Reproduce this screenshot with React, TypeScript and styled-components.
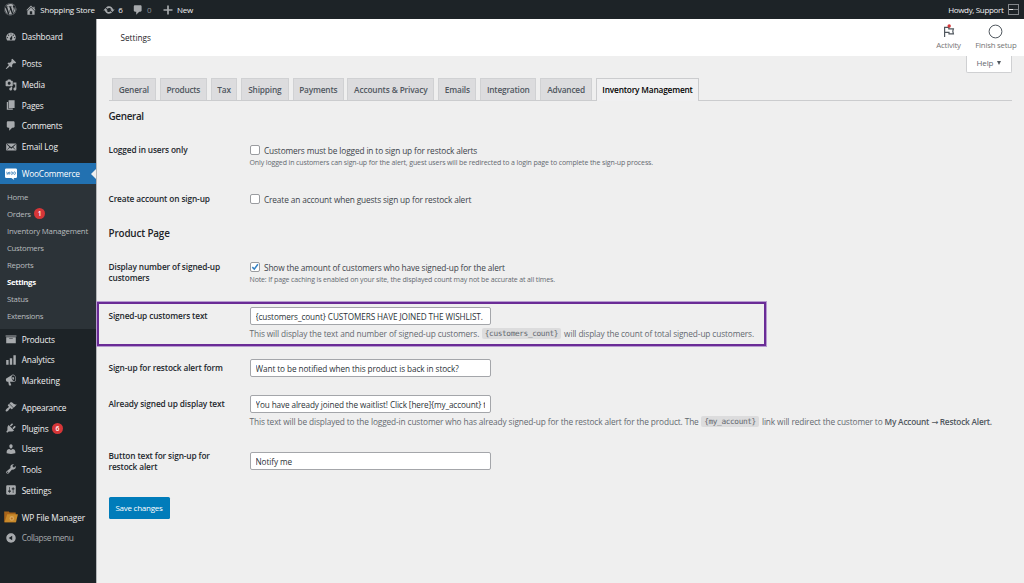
import React from "react";
import styled, { createGlobalStyle, css } from "styled-components";
import { FaWordpress } from "react-icons/fa";

const GlobalStyle = createGlobalStyle`
  * { box-sizing: border-box; }
  body {
    margin: 0;
    background: #efefef;
    color: #3c434a;
    font-family: "Open Sans", "Noto Sans", sans-serif;
    font-size: 8.3px;
    overflow: hidden;
  }
`;

/* ---------- Icons (20 x 20 grid) ---------- */

const iconPaths = {
  home: "M16 8.5l1.53 1.53-1.06 1.06L10 4.6l-6.47 6.49-1.06-1.06L10 2.5l4 4v-2h2v4zm-6-2.46l6 5.99V18H4v-5.97zM12 17v-5H8v5h4z",
  update:
    "M10.2 3.9c3.3 0 6 2.3 6.6 5.3h2.6L15.8 13.4 12.2 9.2h1.9c-.5-1.500-2.100-2.600-3.900-2.600-1.300 0-2.400.5-3.100 1.300L5 5.900C6.300 4.700 8.100 3.900 10.200 3.900zm-.4 12.200c-3.300 0-6-2.300-6.600-5.300H.6L4.200 6.600l3.600 4.200H5.900c.5 1.500 2.100 2.600 3.900 2.600 1.300 0 2.400-.5 3.100-1.300L15 14.100c-1.300 1.200-3.100 2-5.200 2z",
  comments:
    "M5 2h9c1.1 0 2 .9 2 2v7c0 1.1-.9 2-2 2h-2l-5 5v-5H5c-1.1 0-2-.9-2-2V4c0-1.1.9-2 2-2z",
  plus: "M17.500 8.600v2.800h-6.100v6.100H8.600v-6.100H2.500V8.600h6.100V2.500h2.800v6.100z",
  dashboard:
    "M3.76 16h12.48c1.1-1.37 1.76-3.11 1.76-5 0-4.42-3.58-8-8-8s-8 3.58-8 8c0 1.89.66 3.63 1.76 5zM10 4c.55 0 1 .45 1 1s-.45 1-1 1-1-.45-1-1 .45-1 1-1zM6 6c.55 0 1 .45 1 1s-.45 1-1 1-1-.45-1-1 .45-1 1-1zm8 0c.55 0 1 .45 1 1s-.45 1-1 1-1-.45-1-1 .45-1 1-1zm-5.37 5.55L12 7v6c0 1.1-.9 2-2 2s-2-.9-2-2c0-.57.24-1.08.63-1.45zM4 10c.55 0 1 .45 1 1s-.45 1-1 1-1-.45-1-1 .45-1 1-1zm12 0c.55 0 1 .45 1 1s-.45 1-1 1-1-.45-1-1 .45-1 1-1z",
  posts:
    "M10.44 3.02l1.82-1.82 6.36 6.35-1.83 1.82c-1.05-.68-2.48-.57-3.41.36l-.75.75c-.92.93-1.04 2.35-.35 3.41l-1.83 1.82-2.41-2.41-2.8 2.79c-.42.42-3.38 2.71-3.8 2.29s1.86-3.39 2.28-3.81l2.79-2.79L4.1 9.36l1.83-1.82c1.05.69 2.48.57 3.4-.36l.75-.75c.93-.92 1.05-2.35.36-3.41z",
  media:
    "M13 11V4c0-.55-.45-1-1-1h-1.67L9 1H5L3.67 3H2c-.55 0-1 .45-1 1v7c0 .55.45 1 1 1h10c.55 0 1-.45 1-1zM7 4.5c1.38 0 2.5 1.12 2.5 2.5S8.38 9.5 7 9.5 4.5 8.38 4.5 7 5.62 4.5 7 4.5zM14 6h5v10.5c0 1.38-1.12 2.5-2.5 2.5S14 17.88 14 16.5s1.12-2.5 2.5-2.5c.17 0 .34.02.5.05V9h-3V6zm-4 8.05V13h2v3.5c0 1.38-1.12 2.5-2.5 2.5S7 17.88 7 16.5 8.12 14 9.5 14c.17 0 .34.02.5.05z",
  pages: "M6 15V2h10v13H6zm-1 1h8v2H3V5h2v11z",
  email:
    "M19 14.5v-9c0-.83-.67-1.5-1.5-1.5H3.49c-.83 0-1.5.67-1.5 1.5v9c0 .83.67 1.5 1.5 1.5H17.5c.83 0 1.5-.67 1.5-1.5zm-1.31-9.11c.33.33.15.67-.03.84L13.6 9.95l3.9 4.06c.12.14.2.36.06.51-.13.16-.43.15-.56.05l-4.37-3.73-2.14 1.95-2.13-1.95-4.37 3.73c-.13.1-.43.11-.56-.05-.14-.15-.06-.37.06-.51l3.9-4.06-4.06-3.72c-.18-.17-.36-.51-.03-.84s.67-.17.95.07l6.24 5.04 6.25-5.04c.28-.24.62-.4.95-.07z",
  products: "M19 4v2H1V4h18zM2 7h16v10H2V7zm11 3V9H7v1h6z",
  analytics: "M18 18V2h-4v16h4zm-6 0V7H8v11h4zm-6 0v-8H2v8h4z",
  marketing:
    "M18.15 5.94c.46 1.62.38 3.22-.02 4.48-.42 1.28-1.26 2.18-2.3 2.48-.16.06-.26.06-.4.06-.06.02-.12.02-.18.02-.06.02-.14.02-.22.02h-6.8l2.22 5.5c.02.14-.06.26-.14.34-.08.1-.24.16-.34.16H6.95c-.1 0-.26-.06-.34-.16-.08-.08-.16-.2-.14-.34l-1-5.5H4.25l-.02-.02c-.5.06-1.08-.18-1.54-.62s-.88-1.08-1.06-1.88c-.24-.8-.2-1.56-.02-2.2.18-.62.58-1.08 1.06-1.3l.02-.02 9-5.4c.1-.06.18-.1.24-.16.06-.04.14-.08.24-.12.16-.08.28-.12.5-.18 1.04-.3 2.24.1 3.22.98s1.84 2.24 2.26 3.86zm-2.58 5.98h-.02c.4-.1.74-.34 1.04-.7.58-.7.86-1.76.86-3.04 0-.64-.1-1.3-.28-1.98-.34-1.36-1.02-2.5-1.78-3.24s-1.68-1.1-2.46-.88c-.82.22-1.4.96-1.7 2-.32 1.04-.28 2.36.06 3.72.38 1.36 1 2.5 1.8 3.24.78.74 1.62 1.1 2.48.88zm-2.54-7.08c.22-.04.42-.02.62.04.38.16.76.48 1.02 1s.42 1.2.42 1.78c0 .3-.04.56-.12.8-.18.48-.44.84-.86.94-.34.1-.8-.06-1.14-.4s-.64-.86-.78-1.5c-.18-.62-.12-1.24.02-1.72s.48-.84.82-.94z",
  appearance:
    "M14.48 11.06L7.41 3.99l1.5-1.5c.5-.56 2.3-.47 3.51.32 1.21.8 1.43 1.28 2.91 2.1 1.18.64 2.45 1.26 4.45.85zm-.71.71L6.7 4.7 4.93 6.47c-.39.39-.39 1.02 0 1.41l1.06 1.06c.39.39.39 1.03 0 1.42-.6.6-1.43 1.11-2.21 1.69-.35.26-.7.53-1.01.84C1.43 14.23.4 16.08 1.4 17.07c.99 1 2.84-.03 4.18-1.36.31-.31.58-.66.85-1.02.57-.78 1.08-1.61 1.69-2.21.39-.39 1.02-.39 1.41 0l1.06 1.06c.39.39 1.02.39 1.41 0z",
  plugins:
    "M13.11 4.36L9.87 7.6 8 5.73l3.24-3.24c.35-.34 1.05-.2 1.56.32.52.51.66 1.21.31 1.55zm-8 1.77l.91-1.12 9.01 9.01-1.19.84c-.71.71-2.63 1.16-3.82 1.16H6.14L4.9 17.26c-.59.59-1.54.59-2.12 0-.59-.58-.59-1.53 0-2.12l1.24-1.24v-3.88c0-1.13.4-3.19 1.09-3.89zm7.26 3.97l3.24-3.24c.34-.35 1.04-.21 1.55.31.52.51.66 1.21.31 1.55l-3.24 3.25z",
  users:
    "M10 9.25c-2.27 0-2.73-3.44-2.73-3.44C7 4.02 7.82 2 9.97 2c2.16 0 2.98 2.02 2.71 3.81 0 0-.41 3.44-2.68 3.44zm0 2.57L12.72 10c2.39 0 4.52 2.33 4.52 4.53v2.49s-3.65 1.13-7.24 1.13c-3.65 0-7.24-1.13-7.24-1.13v-2.49c0-2.25 1.94-4.48 4.47-4.48z",
  tools:
    "M16.68 9.77c-1.34 1.34-3.3 1.67-4.95.99l-5.41 6.52c-.99.99-2.59.99-3.58 0s-.99-2.59 0-3.57l6.52-5.42c-.68-1.65-.35-3.61.99-4.95 1.28-1.28 3.12-1.62 4.72-1.06l-2.89 2.89 2.82 2.82 2.86-2.87c.53 1.58.18 3.39-1.08 4.65zM3.81 16.21c.4.39 1.04.39 1.43 0 .4-.4.4-1.04 0-1.43-.39-.4-1.03-.4-1.43 0-.39.39-.39 1.03 0 1.43z",
  settings:
    "M18 16V4c0-1.1-.9-2-2-2H4c-1.1 0-2 .9-2 2v12c0 1.1.9 2 2 2h12c1.1 0 2-.9 2-2zM8 11h1c.55 0 1 .45 1 1s-.45 1-1 1H8v1.5c0 .28-.22.5-.5.5s-.5-.22-.5-.5V13H6c-.55 0-1-.45-1-1s.45-1 1-1h1V5.5c0-.28.22-.5.5-.5s.5.22.5.5V11zm5-2h-1c-.55 0-1-.45-1-1s.45-1 1-1h1V5.5c0-.28.22-.5.5-.5s.5.22.5.5V7h1c.55 0 1 .45 1 1s-.45 1-1 1h-1v5.5c0 .28-.22.5-.5.5s-.5-.22-.5-.5V9z",
  collapse:
    "M10 2.16c4.33 0 7.84 3.51 7.84 7.84s-3.51 7.84-7.84 7.84S2.16 14.33 2.16 10 5.71 2.16 10 2.16zm2 11.72V6.12L6.18 9.97z",
};

type IconName = keyof typeof iconPaths;

const IconSvg = styled.svg`
  flex: none;
  display: block;
  width: 12px;
  height: 12px;
  fill: #a7aaad;
`;

const Icon = ({ name }: { name: IconName }) => (
  <IconSvg viewBox="0 0 20 20">
    <path fillRule="evenodd" d={iconPaths[name]} />
  </IconSvg>
);

const WooIcon = () => (
  <IconSvg viewBox="0 0 20 20">
    <path
      fill="#fff"
      d="M2.200 .8h15.600a2.200 2.200 0 0 1 2.200 2.200v11.400a2.200 2.200 0 0 1-2.200 2.200h-3.400l1 3.400-4.800-3.400H2.200a2.200 2.200 0 0 1-2.200-2.200V3a2.200 2.200 0 0 1 2.200-2.200z"
    />
    <path
      fill="none"
      stroke="#2271b1"
      strokeWidth="1.1"
      d="M2.800 6.200l1 4.600 2-3.800 1 3.800 1-4.600M12.800 8.600a1.500 2.300 0 1 1-3 0a1.500 2.300 0 1 1 3 0zM17.400 8.600a1.500 2.300 0 1 1-3 0a1.500 2.300 0 1 1 3 0z"
    />
  </IconSvg>
);

const FolderSvg = styled.svg`
  flex: none;
  display: block;
  width: 14px;
  height: 12px;
`;

const FolderIcon = () => (
  <FolderSvg viewBox="0 0 14 12">
    <path fill="#a8641a" d="M.2.6h4.600l.8 1h6.100v9.700H.2z" />
    <path fill="#c98a2b" d="M3.200 3.200h10.700L12 11.300H.6z" />
    <circle cx="7.800" cy="7.400" r="2.300" fill="#d9a55c" />
    <circle cx="7.800" cy="7.400" r="1" fill="#b97722" />
  </FolderSvg>
);

/* ---------- Top bar ---------- */

const AdminBar = styled.header`
  display: flex;
  align-items: center;
  height: 19px;
  padding: 0 5px 0 4px;
  background: #1d2327;
  color: #f0f0f1;
  font-size: 8px;
`;

const LogoMark = styled(FaWordpress)`
  width: 12.5px;
  height: 12.5px;
  color: #a7aaad;
`;

const BarItem = styled.div<{ $gap: number; $left: number; $track?: number; $dim?: boolean }>`
  display: flex;
  align-items: center;
  gap: ${(p) => p.$gap}px;
  margin-left: ${(p) => p.$left}px;
  letter-spacing: ${(p) => p.$track ?? 0}px;
  color: ${(p) => (p.$dim ? "#8c9196" : "inherit")};
  white-space: nowrap;
`;

const Account = styled.div`
  display: flex;
  align-items: center;
  gap: 4px;
  margin-left: auto;
  letter-spacing: -0.33px;
`;

const Avatar = styled.span`
  display: flex;
  align-items: center;
  width: 11.5px;
  height: 11px;
  border: 1px solid #82868a;

  &::before {
    content: "";
    width: 9px;
    height: 1px;
    background: linear-gradient(90deg, #e8e8e8 50%, #7b7f83 50%);
  }
`;

/* ---------- Sidebar ---------- */

const Shell = styled.div`
  display: grid;
  grid-template-columns: 96px 1fr;
  height: 564px;
`;

const Sidebar = styled.nav`
  background: #1d2327;
  padding-top: 7.5px;
`;

const MenuItem = styled.div<{ $track: number; $active?: boolean; $muted?: boolean }>`
  position: relative;
  display: flex;
  align-items: center;
  height: 20.7px;
  padding-left: 5px;
  color: ${(p) => (p.$muted ? "#a7aaad" : "#f0f0f1")};
  letter-spacing: ${(p) => p.$track}px;
  white-space: nowrap;
  ${(p) =>
    p.$active &&
    css`
      background: #2271b1;
      color: #fff;
      &::after {
        content: "";
        position: absolute;
        right: 0;
        top: 5.4px;
        border: 5px solid transparent;
        border-left-width: 0;
        border-right-color: #efefef;
      }
    `}
`;

const IconSlot = styled.span`
  display: flex;
  justify-content: center;
  width: 12px;
  margin-right: 4.7px;
`;

const Separator = styled.div`
  height: 6.3px;
`;

const SubMenu = styled.div`
  padding: 4.4px 0 4.4px 7px;
  background: #2c3338;
`;

const SubItem = styled.div<{ $track: number; $current?: boolean }>`
  display: flex;
  align-items: center;
  height: 17px;
  color: ${(p) => (p.$current ? "#fff" : "#b8bcbf")};
  font-size: 7.8px;
  font-weight: ${(p) => (p.$current ? 700 : 400)};
  letter-spacing: ${(p) => p.$track}px;
  white-space: nowrap;
`;

const Bubble = styled.span`
  display: flex;
  align-items: center;
  justify-content: center;
  width: 11px;
  height: 11px;
  margin-left: 3.5px;
  border-radius: 50%;
  background: #d63638;
  color: #fff;
  font-size: 6.8px;
  font-weight: 600;
  letter-spacing: 0;
`;

/* ---------- Page header ---------- */

const Main = styled.main`
  min-width: 0;
  border-left: 1px solid #b4b6b8;
`;

const PageHeader = styled.div`
  display: flex;
  align-items: center;
  height: 37px;
  padding: 0 7.500px 0 23.500px;
  background: #fff;
`;

const PageTitle = styled.h1`
  margin: 0 auto 0 0;
  color: #1d2327;
  font-size: 8.2px;
  font-weight: 500;
  letter-spacing: 0;
`;

const HeaderAction = styled.div<{ $left: number }>`
  display: flex;
  flex-direction: column;
  align-items: center;
  gap: 1px;
  margin: 0 0 0 ${(p) => p.$left}px;
  color: #757575;
  font-size: 7.8px;
  line-height: 11px;
  letter-spacing: -0.2px;
  white-space: nowrap;

  svg {
    width: 15px;
    height: 15px;
    fill: none;
    stroke: #50575e;
  }
`;

const HelpRow = styled.div`
  display: flex;
  justify-content: flex-end;
  height: 22px;
  padding-right: 12px;
`;

const HelpButton = styled.div`
  display: flex;
  align-items: center;
  gap: 4px;
  width: 46px;
  height: 17px;
  padding: 0 0 3px 9.5px;
  border: 1px solid #cfd0d2;
  border-top: 0;
  border-radius: 0 0 2px 2px;
  background: #fff;
  color: #646970;
  font-size: 8px;
  letter-spacing: -0.1px;

  &::after {
    content: "";
    margin-top: 1px;
    border: 2.9px solid transparent;
    border-top: 4.500px solid #50575e;
    border-bottom: 0;
  }
`;

/* ---------- Tabs ---------- */

const TabBar = styled.div`
  display: flex;
  height: 23px;
  margin: 0 12px 0 11.500px;
  padding-left: 3.3px;
  border-bottom: 1px solid #cbccce;
`;

const Tab = styled.div<{ $width: number; $gap: number; $active?: boolean; $track?: number }>`
  display: flex;
  align-items: center;
  justify-content: center;
  width: ${(p) => p.$width}px;
  height: ${(p) => (p.$active ? 23 : 22)}px;
  padding-bottom: ${(p) => (p.$active ? 1 : 0)}px;
  margin-right: ${(p) => p.$gap}px;
  border: 1px solid ${(p) => (p.$active ? "#cbccce" : "#d0d1d3")};
  border-bottom: 0;
  background: ${(p) => (p.$active ? "#f0f0f1" : "#dcdcde")};
  color: ${(p) => (p.$active ? "#000" : "#50575e")};
  font-weight: 600;
  letter-spacing: ${(p) => p.$track ?? -0.18}px;
  white-space: nowrap;
`;

/* ---------- Form ---------- */

const Form = styled.form`
  padding-left: 11.5px;
`;

const SectionTitle = styled.h2<{ $top: number; $bottom: number; $track: number }>`
  margin: ${(p) => p.$top}px 0 ${(p) => p.$bottom}px;
  color: #1d2327;
  font-size: 9.9px;
  font-weight: 600;
  line-height: 15px;
  letter-spacing: ${(p) => p.$track}px;
`;

const Row = styled.div<{ $height: number; $offset?: number }>`
  display: grid;
  grid-template-columns: 141px 1fr;
  height: ${(p) => p.$height}px;
  padding-top: ${(p) => p.$offset ?? 0}px;
`;

const HighlightedRow = styled(Row)`
  width: 669.500px;
  margin-left: -12px;
  padding-left: 10px;
  border: 2px solid #6a2c96;
  outline: 0.5px solid #b79bd0;
`;

const Label = styled.div`
  padding-top: 6.8px;
  color: #23282d;
  font-weight: 600;
  line-height: 10.8px;
  letter-spacing: -0.13px;
`;

const Field = styled.div`
  min-width: 0;
`;

const CheckLine = styled.label`
  display: flex;
  align-items: center;
  gap: 4.5px;
  height: 24px;
  letter-spacing: -0.135px;
  white-space: nowrap;
`;

const Box = styled.span`
  display: flex;
  width: 10px;
  height: 10px;
  border: 1px solid #9a9ca0;
  border-radius: 2px;
  background: #fff;

  svg {
    width: 8px;
    height: 8px;
    fill: none;
    stroke: #3582c4;
    stroke-width: 1.5;
  }
`;

const Hint = styled.div<{ $track?: number }>`
  margin-top: -4.5px;
  color: #646970;
  font-size: 7px;
  line-height: 10px;
  letter-spacing: ${(p) => p.$track ?? -0.12}px;
  white-space: nowrap;
`;

const TextInput = styled.div<{ $top: number; $track?: number }>`
  width: 241px;
  height: 18px;
  margin-top: ${(p) => p.$top}px;
  padding: 0 5px;
  border: 1px solid #a4a6aa;
  border-radius: 2px;
  background: #fff;
  color: #2c3338;
  font-size: 8.2px;
  line-height: 17px;
  letter-spacing: ${(p) => p.$track ?? -0.08}px;

  span {
    display: block;
    overflow: hidden;
    white-space: nowrap;
  }
`;

const Description = styled.p`
  display: flex;
  align-items: center;
  margin: 3px 0 0;
  height: 11px;
  color: #646970;
  letter-spacing: -0.12px;
  white-space: nowrap;

  strong {
    margin-left: 2px;
    color: #50575e;
    font-weight: 600;
    letter-spacing: -0.22px;
  }
`;

const Arrow = styled.span`
  font-family: "DejaVu Sans", sans-serif;
  font-weight: 400;
`;

const Code = styled.code`
  margin: 0 3px 0 2.5px;
  padding: 0 3px;
  border-radius: 2px;
  background: #dcdcdd;
  font-family: "DejaVu Sans Mono", monospace;
  font-size: 7.8px;
  line-height: 11px;
  letter-spacing: -0.38px;
`;

const SaveButton = styled.button`
  display: block;
  width: 61px;
  height: 22px;
  margin-top: 8.5px;
  padding: 0;
  border: 0;
  border-radius: 1.5px;
  background: #007cba;
  color: #fff;
  font: 400 8px "Open Sans", sans-serif;
  letter-spacing: -0.25px;
`;

const Flag = () => (
  <svg viewBox="0 0 15 15">
    <path strokeWidth="1.2" d="M3.6 13V3.4h4.2v1.4h4.6l-.6 2.4.6 2.6H8V8.4H3.6" />
    <circle cx="8.2" cy="2" r="1.7" fill="#d63638" stroke="none" />
  </svg>
);

const Ring = () => (
  <svg viewBox="0 0 15 15">
    <circle cx="7.5" cy="7.5" r="6.4" strokeWidth="1" />
  </svg>
);

type Entry = { icon: IconName; label: string; track: number; badge?: string };

const contentMenu: Entry[] = [
  { icon: "posts", label: "Posts", track: -0.15 },
  { icon: "media", label: "Media", track: -0.15 },
  { icon: "pages", label: "Pages", track: -0.15 },
  { icon: "comments", label: "Comments", track: -0.22 },
  { icon: "email", label: "Email Log", track: -0.1 },
];

const shopMenu: Entry[] = [
  { icon: "products", label: "Products", track: -0.17 },
  { icon: "analytics", label: "Analytics", track: -0.15 },
  { icon: "marketing", label: "Marketing", track: -0.1 },
];

const siteMenu: Entry[] = [
  { icon: "appearance", label: "Appearance", track: -0.19 },
  { icon: "plugins", label: "Plugins", track: -0.15, badge: "6" },
  { icon: "users", label: "Users", track: -0.18 },
  { icon: "tools", label: "Tools", track: -0.15 },
  { icon: "settings", label: "Settings", track: -0.13 },
];

const wooMenu = [
  { label: "Home", track: -0.25 },
  { label: "Orders", track: -0.25, badge: "1" },
  { label: "Inventory Management", track: -0.19 },
  { label: "Customers", track: -0.29 },
  { label: "Reports", track: -0.25 },
  { label: "Settings", track: -0.35, current: true },
  { label: "Status", track: -0.25 },
  { label: "Extensions", track: -0.31 },
];

const tabs = [
  { label: "General", width: 44, gap: 4 },
  { label: "Products", width: 47, gap: 4, track: -0.25 },
  { label: "Tax", width: 26.5, gap: 3.5 },
  { label: "Shipping", width: 48, gap: 4 },
  { label: "Payments", width: 51, gap: 3.5 },
  { label: "Accounts & Privacy", width: 87, gap: 4, track: -0.14 },
  { label: "Emails", width: 38, gap: 4 },
  { label: "Integration", width: 56, gap: 4 },
  { label: "Advanced", width: 51.5, gap: 4 },
  { label: "Inventory Management", width: 103.5, gap: 0, active: true },
];

const MenuEntries = ({ entries }: { entries: Entry[] }) => (
  <>
    {entries.map((e) => (
      <MenuItem key={e.label} $track={e.track}>
        <IconSlot>
          <Icon name={e.icon} />
        </IconSlot>
        {e.label}
        {e.badge && <Bubble>{e.badge}</Bubble>}
      </MenuItem>
    ))}
  </>
);

export default function App() {
  return (
    <>
      <GlobalStyle />
      <AdminBar>
        <LogoMark />
        <BarItem $left={8.5} $gap={3.3} $track={-0.18}>
          <Icon name="home" />
          Shopping Store
        </BarItem>
        <BarItem $left={8.5} $gap={3}>
          <Icon name="update" />6
        </BarItem>
        <BarItem $left={9} $gap={3} $dim>
          <Icon name="comments" />0
        </BarItem>
        <BarItem $left={10} $gap={3.5} $track={-0.25}>
          <Icon name="plus" />
          New
        </BarItem>
        <Account>
          Howdy, Support
          <Avatar />
        </Account>
      </AdminBar>
      <Shell>
        <Sidebar>
          <MenuItem $track={-0.2}>
            <IconSlot>
              <Icon name="dashboard" />
            </IconSlot>
            Dashboard
          </MenuItem>
          <Separator />
          <MenuEntries entries={contentMenu} />
          <Separator />
          <MenuItem $track={-0.17} $active>
            <IconSlot>
              <WooIcon />
            </IconSlot>
            WooCommerce
          </MenuItem>
          <SubMenu>
            {wooMenu.map((s) => (
              <SubItem key={s.label} $track={s.track} $current={s.current}>
                {s.label}
                {s.badge && <Bubble>{s.badge}</Bubble>}
              </SubItem>
            ))}
          </SubMenu>
          <MenuEntries entries={shopMenu} />
          <Separator />
          <MenuEntries entries={siteMenu} />
          <Separator />
          <MenuItem $track={-0.06}>
            <IconSlot>
              <FolderIcon />
            </IconSlot>
            WP File Manager
          </MenuItem>
          <MenuItem $track={-0.44} $muted>
            <IconSlot>
              <Icon name="collapse" />
            </IconSlot>
            Collapse menu
          </MenuItem>
        </Sidebar>
        <Main>
          <PageHeader>
            <PageTitle>Settings</PageTitle>
            <HeaderAction $left={0}>
              <Flag />
              Activity
            </HeaderAction>
            <HeaderAction $left={14.5}>
              <Ring />
              Finish setup
            </HeaderAction>
          </PageHeader>
          <HelpRow>
            <HelpButton>Help</HelpButton>
          </HelpRow>
          <TabBar>
            {tabs.map((t) => (
              <Tab key={t.label} $width={t.width} $gap={t.gap} $track={t.track} $active={t.active}>
                {t.label}
              </Tab>
            ))}
          </TabBar>
          <Form>
            <SectionTitle $top={8} $bottom={14} $track={-0.33}>
              General
            </SectionTitle>
            <Row $height={49}>
              <Label>Logged in users only</Label>
              <Field>
                <CheckLine>
                  <Box />
                  Customers must be logged in to sign up for restock alerts
                </CheckLine>
                <Hint>
                  Only logged in customers can sign-up for the alert, guest users will be redirected to a login
                  page to complete the sign-up process.
                </Hint>
              </Field>
            </Row>
            <Row $height={39}>
              <Label>Create account on sign-up</Label>
              <Field>
                <CheckLine>
                  <Box />
                  Create an account when guests sign up for restock alert
                </CheckLine>
              </Field>
            </Row>
            <SectionTitle $top={0} $bottom={14} $track={-0.16}>
              Product Page
            </SectionTitle>
            <Row $height={47}>
              <Label>
                Display number of signed-up
                <br />
                customers
              </Label>
              <Field>
                <CheckLine>
                  <Box>
                    <svg viewBox="0 0 8 8">
                      <path d="M1.3 4.1l2 2L6.9 1.2" />
                    </svg>
                  </Box>
                  Show the amount of customers who have signed-up for the alert
                </CheckLine>
                <Hint $track={-0.135}>
                  Note: If page caching is enabled on your site, the displayed count may not be accurate at all
                  times.
                </Hint>
              </Field>
            </Row>
            <HighlightedRow $height={44}>
              <Label>Signed-up customers text</Label>
              <Field>
                <TextInput $top={3}>
                  <span>{"{customers_count} CUSTOMERS HAVE JOINED THE WISHLIST."}</span>
                </TextInput>
                <Description>
                  This will display the text and number of signed-up customers.
                  <Code>{"{customers_count}"}</Code>
                  will display the count of total signed-up customers.
                </Description>
              </Field>
            </HighlightedRow>
            <Row $height={46.5} $offset={10}>
              <Label>Sign-up for restock alert form</Label>
              <Field>
                <TextInput $top={3}>
                  <span>Want to be notified when this product is back in stock?</span>
                </TextInput>
              </Field>
            </Row>
            <Row $height={51.5}>
              <Label>Already signed up display text</Label>
              <Field>
                <TextInput $top={2.5} $track={-0.12}>
                  <span>{"You have already joined the waitlist! Click [here]{my_account} t"}</span>
                </TextInput>
                <Description>
                  This text will be displayed to the logged-in customer who has already signed-up for the restock
                  alert for the product. The
                  <Code>{"{my_account}"}</Code>
                  link will redirect the customer to{" "}
                  <strong>
                    My Account <Arrow>→</Arrow> Restock Alert.
                  </strong>
                </Description>
              </Field>
            </Row>
            <Row $height={44}>
              <Label>
                Button text for sign-up for
                <br />
                restock alert
              </Label>
              <Field>
                <TextInput $top={8}>
                  <span>Notify me</span>
                </TextInput>
              </Field>
            </Row>
            <SaveButton type="button">Save changes</SaveButton>
          </Form>
        </Main>
      </Shell>
    </>
  );
}
